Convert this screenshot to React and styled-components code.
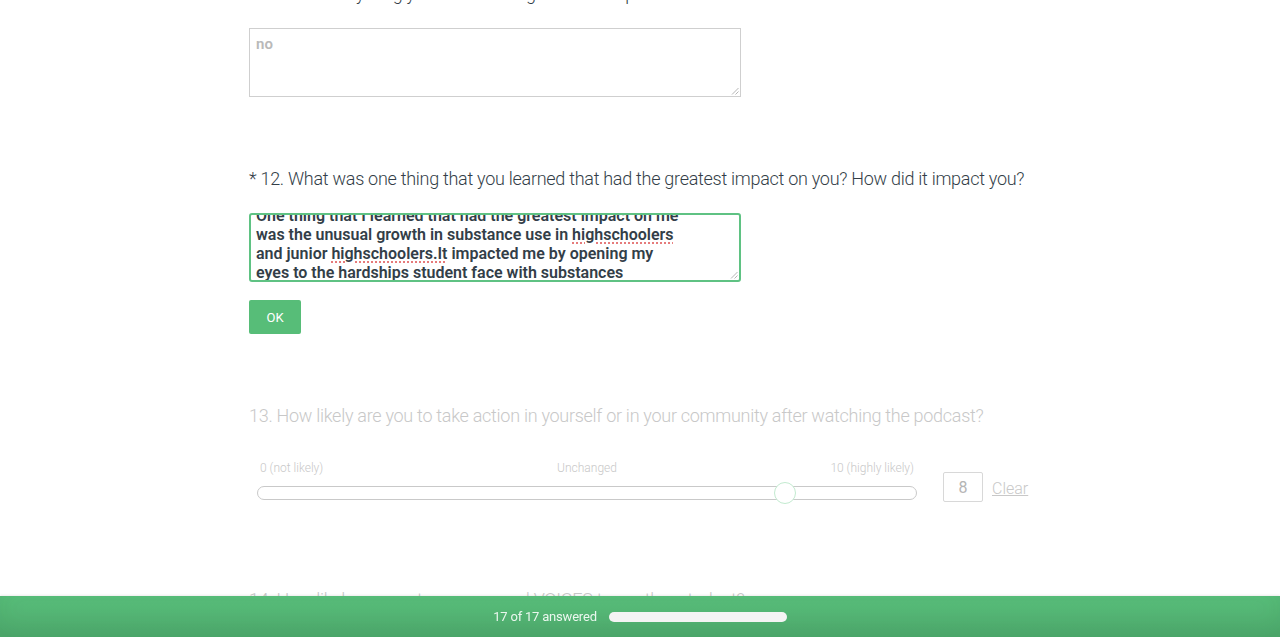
import React from "react";
import styled, { createGlobalStyle } from "styled-components";

const GlobalStyle = createGlobalStyle`
  html, body {
    margin: 0;
    padding: 0;
    background: #ffffff;
    font-family: Roboto, "Liberation Sans", sans-serif;
    overflow: hidden;
  }
`;

const App = () => {
  const answerLines = [
    "One thing that I learned that had the greatest impact on me",
    <>was the unusual growth in substance use in <Misspelled>highschoolers</Misspelled></>,
    <>and junior <Misspelled>highschoolers.It</Misspelled> impacted me by opening my</>,
    "eyes to the hardships student face with substances",
  ];

  return (
    <Page>
      <GlobalStyle />
      <Column>
        <Question>
          <Title>11. Is there anything you would change about the podcast?</Title>
          <FakeArea muted>
            <AreaText muted>no</AreaText>
            <Grip />
          </FakeArea>
        </Question>

        <Question>
          <Title>* 12. What was one thing that you learned that had the greatest impact on you? How did it impact you?</Title>
          <FakeArea active>
            <AreaText>
              {answerLines.map((line, index) => (
                <Line key={index}>{line}</Line>
              ))}
            </AreaText>
            <Grip />
          </FakeArea>
          <OkButton>OK</OkButton>
        </Question>

        <Question faded>
          <Title>13. How likely are you to take action in yourself or in your community after watching the podcast?</Title>
          <SliderRow>
            <SliderBox>
              <Labels>
                <span>0 (not likely)</span>
                <Middle>Unchanged</Middle>
                <End>10 (highly likely)</End>
              </Labels>
              <Track>
                <Thumb style={{ left: `${(8 / 10) * 100}%` }} />
              </Track>
            </SliderBox>
            <ValueBox>8</ValueBox>
            <ClearLink>Clear</ClearLink>
          </SliderRow>
        </Question>

        <Question faded spaced>
          <Title>14. How likely are you to recommend VOICES to another student?</Title>
        </Question>
      </Column>

      <Footer>
        <FooterText>17 of 17 answered</FooterText>
        <Progress />
      </Footer>
    </Page>
  );
};

const Grip = () => (
  <GripIcon width="8" height="8" viewBox="0 0 8 8">
    <path d="M7.5 1 L1 7.5 M7.5 4.5 L4.5 7.5" stroke="#b5b5b5" strokeWidth="1" />
  </GripIcon>
);

const Page = styled.div`
  width: 1280px;
  height: 637px;
  overflow: hidden;
`;

const Column = styled.div`
  width: 782px;
  margin: -18px auto 0;
  display: flex;
  flex-direction: column;
  gap: 70px;
`;

const Question = styled.section`
  display: flex;
  flex-direction: column;
  align-items: flex-start;
  margin-top: ${(p) => (p.spaced ? "18px" : "0")};
  color: ${(p) => (p.faded ? "#c8c8c8" : "#333e48")};
`;

const Title = styled.h2`
  margin: 0 0 22px;
  font-size: 18px;
  line-height: 24px;
  font-weight: 300;
  letter-spacing: -0.28px;
  white-space: nowrap;
`;

const FakeArea = styled.div`
  position: relative;
  box-sizing: border-box;
  width: 492px;
  height: 69px;
  overflow: hidden;
  display: flex;
  flex-direction: column;
  justify-content: ${(p) => (p.active ? "flex-end" : "flex-start")};
  border: ${(p) => (p.active ? "2px solid #5fc283" : "1px solid #cfcfcf")};
  border-radius: ${(p) => (p.active ? "3px" : "0")};
  padding: ${(p) => (p.active ? "0 5px" : "6px 6px")};
  background: #fff;
`;

const AreaText = styled.div`
  font-size: ${(p) => (p.muted ? "15px" : "16px")};
  line-height: 19px;
  font-weight: 600;
  margin-bottom: ${(p) => (p.muted ? "0" : "-2px")};
  color: ${(p) => (p.muted ? "#b9b9b9" : "#333e48")};
`;

const Line = styled.div`
  white-space: nowrap;
`;

const Misspelled = styled.span`
  text-decoration: underline dotted #e05b5b;
  text-underline-offset: 3px;
`;

const GripIcon = styled.svg`
  position: absolute;
  right: 1px;
  bottom: 1px;
`;

const OkButton = styled.button`
  margin-top: 18px;
  width: 52px;
  height: 34px;
  border: none;
  border-radius: 2px;
  background: #57bd78;
  color: #ffffff;
  font-family: Roboto, "Liberation Sans", sans-serif;
  font-size: 13px;
  font-weight: 400;
  cursor: pointer;
`;

const SliderRow = styled.div`
  display: flex;
  align-items: flex-end;
  padding: 10px 0 0 8px;
`;

const SliderBox = styled.div`
  width: 660px;
  display: flex;
  flex-direction: column;
  gap: 10px;
`;

const Labels = styled.div`
  display: grid;
  grid-template-columns: 1fr auto 1fr;
  padding: 0 3px;
  font-size: 12px;
  line-height: 16px;
  font-weight: 300;
  color: #c8c8c8;
`;

const Middle = styled.span`
  text-align: center;
`;

const End = styled.span`
  text-align: right;
`;

const Track = styled.div`
  position: relative;
  box-sizing: border-box;
  height: 14px;
  border: 1px solid #c9c9c9;
  border-radius: 7px;
  background: #fff;
`;

const Thumb = styled.div`
  position: absolute;
  top: 50%;
  width: 22px;
  height: 22px;
  box-sizing: border-box;
  border: 1px solid #c3ebd0;
  border-radius: 50%;
  background: #fff;
  transform: translate(-50%, -50%);
  margin-left: 1px;
`;

const ValueBox = styled.div`
  box-sizing: border-box;
  width: 40px;
  height: 30px;
  margin: 0 9px -2px 26px;
  border: 1px solid #d8d8d8;
  border-radius: 2px;
  display: flex;
  align-items: center;
  justify-content: center;
  font-size: 16px;
  font-weight: 400;
  color: #b5b5b5;
`;

const ClearLink = styled.a`
  font-size: 16px;
  line-height: 20px;
  font-weight: 300;
  color: #c8c8c8;
  text-decoration: underline;
  margin-bottom: 1px;
  cursor: pointer;
`;

const Footer = styled.footer`
  position: fixed;
  left: 0;
  right: 0;
  bottom: 0;
  height: 41px;
  display: flex;
  align-items: center;
  justify-content: center;
  gap: 12px;
  background: linear-gradient(#58be7a, #4fab6e);
  box-shadow: 0 -1px 2px rgba(0, 0, 0, 0.08), inset 0 -8px 24px rgba(0, 60, 20, 0.08);
`;

const FooterText = styled.span`
  font-size: 13px;
  font-weight: 400;
  letter-spacing: -0.2px;
  color: #eaf7ee;
`;

const Progress = styled.div`
  width: 178px;
  height: 10px;
  border-radius: 5px;
  background: #f4f4f4;
`;

export default App;
